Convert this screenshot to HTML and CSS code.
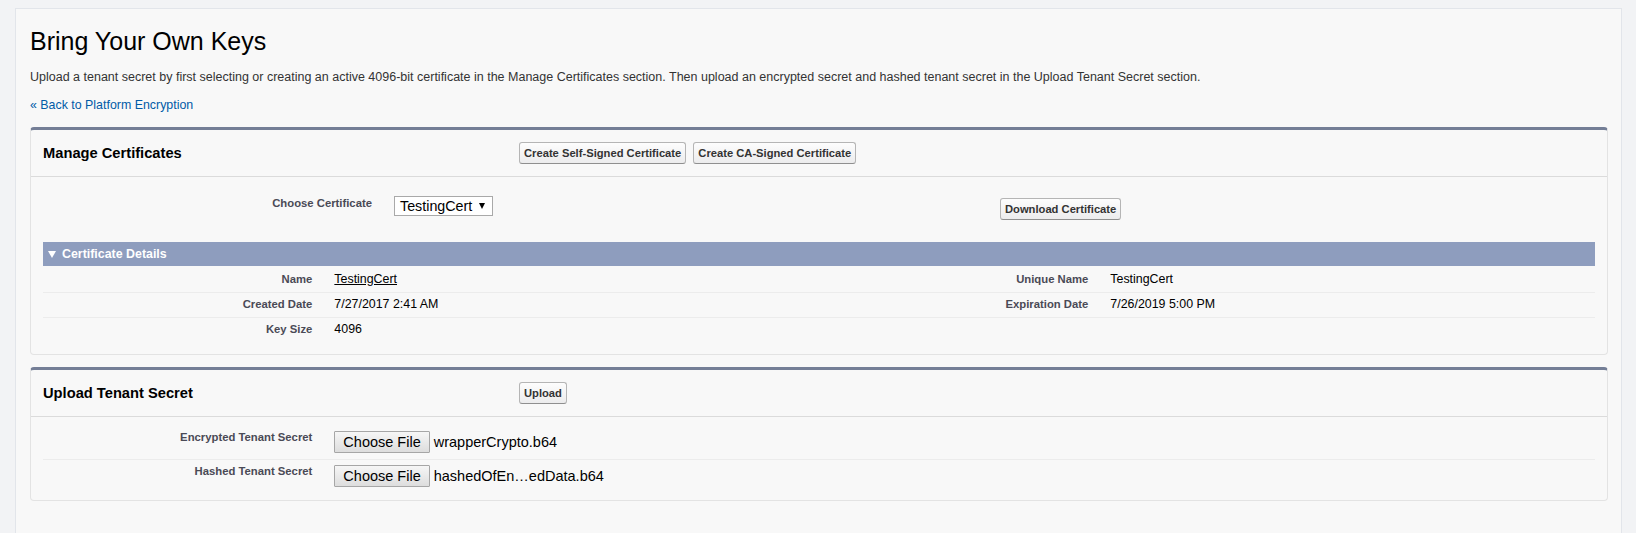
FILE: index.html
```html
<!DOCTYPE html>
<html lang="en">
<head>
<meta charset="utf-8">
<title>Bring Your Own Keys</title>
<link rel="stylesheet" href="styles.css">
</head>
<body>
<div class="page">
  <div class="card">
    <h1 class="title">Bring Your Own Keys</h1>
    <p class="desc">Upload a tenant secret by first selecting or creating an active 4096-bit certificate in the Manage Certificates section. Then upload an encrypted secret and hashed tenant secret in the Upload Tenant Secret section.</p>
    <a class="back" href="#">« Back to Platform Encryption</a>

    <section class="block">
      <div class="block-head">
        <h2 class="block-title">Manage Certificates</h2>
        <div class="btns">
          <button class="btn" type="button">Create Self-Signed Certificate</button>
          <button class="btn" type="button">Create CA-Signed Certificate</button>
        </div>
      </div>
      <div class="block-body cert-body">
        <div class="choose-row">
          <div class="lbl">Choose Certificate</div>
          <div class="val"><span class="fake-select">TestingCert<span class="caret"></span></span></div>
          <div class="dl"><button class="btn" type="button">Download Certificate</button></div>
        </div>
        <div class="subhead"><span class="tri"></span>Certificate Details</div>
        <div class="details">
          <div class="drow">
            <div class="lbl">Name</div>
            <div class="val"><a class="ulink" href="#">TestingCert</a></div>
            <div class="lbl">Unique Name</div>
            <div class="val">TestingCert</div>
          </div>
          <div class="drow">
            <div class="lbl">Created Date</div>
            <div class="val">7/27/2017 2:41 AM</div>
            <div class="lbl">Expiration Date</div>
            <div class="val">7/26/2019 5:00 PM</div>
          </div>
          <div class="drow last">
            <div class="lbl">Key Size</div>
            <div class="val">4096</div>
            <div class="lbl"></div>
            <div class="val"></div>
          </div>
        </div>
      </div>
    </section>

    <section class="block">
      <div class="block-head">
        <h2 class="block-title">Upload Tenant Secret</h2>
        <div class="btns">
          <button class="btn" type="button">Upload</button>
        </div>
      </div>
      <div class="block-body upload-body">
        <div class="urow">
          <div class="lbl">Encrypted Tenant Secret</div>
          <div class="val"><span class="file-btn">Choose File</span><span class="file-name">wrapperCrypto.b64</span></div>
        </div>
        <div class="urow last">
          <div class="lbl">Hashed Tenant Secret</div>
          <div class="val"><span class="file-btn">Choose File</span><span class="file-name">hashedOfEn…edData.b64</span></div>
        </div>
      </div>
    </section>
  </div>
</div>
</body>
</html>
```

FILE: styles.css
```css
* { box-sizing: border-box; }
html, body { margin: 0; padding: 0; }
body {
  background: #f2f3f5;
  font-family: "Liberation Sans", Arial, sans-serif;
  color: #000;
  overflow: hidden;
}
.page { padding: 8px 14px 0 15px; }
.card {
  background: #f8f8f8;
  border: 1px solid #e2e5ea;
  border-bottom: 0;
  min-height: calc(100vh - 8px);
  padding: 0 13px 0 14px;
}
.title {
  margin: 0;
  padding-top: 17px;
  font-size: 25px;
  line-height: 30px;
  font-weight: normal;
  color: #000;
}
.desc {
  margin: 14px 0 0;
  font-size: 12.5px;
  line-height: 15px;
  color: #333;
}
.back {
  display: block;
  margin-top: 13px;
  font-size: 12.4px;
  line-height: 15px;
  color: #015ba7;
  text-decoration: none;
}
.block {
  margin-top: 14px;
  background: #f8f8f8;
  border: 1px solid #e3e3e3;
  border-top: 3px solid #747e96;
  border-radius: 4px;
}
.block + .block { margin-top: 12px; }
.block-head {
  display: grid;
  grid-template-columns: 476px 1fr;
  align-items: center;
  height: 47px;
  padding-left: 12px;
  border-bottom: 1px solid #dbdbdb;
}
.block-title {
  margin: 0;
  font-size: 14.7px;
  font-weight: bold;
  color: #000;
  line-height: 18px;
}
.btns { display: flex; gap: 7px; }
.btn {
  font-family: "Liberation Sans", Arial, sans-serif;
  font-size: 11.2px;
  font-weight: bold;
  color: #333;
  line-height: 13px;
  padding: 4px 4px 3px;
  margin: 0;
  border: 1px solid #b5b5b5;
  border-bottom-color: #8f8f8f;
  border-radius: 3px;
  background: linear-gradient(#fdfdfd, #ececed);
}
.cert-body { padding: 19px 12px 12px; }
.lbl {
  font-size: 11.3px;
  font-weight: bold;
  color: #4a4a56;
  text-align: right;
  padding-right: 10px;
  line-height: 14px;
}
.val {
  padding-left: 12px;
  font-size: 12.4px;
  line-height: 14px;
  color: #000;
}
.choose-row {
  display: grid;
  grid-template-columns: 339px 618px 1fr;
  align-items: start;
}
.fake-select {
  display: inline-flex;
  align-items: center;
  height: 20px;
  padding: 0 7px 0 5px;
  border: 1px solid #a9a9a9;
  background: #fff;
  font-size: 14.3px;
  line-height: 18px;
  color: #000;
}
.caret {
  display: inline-block;
  width: 0; height: 0;
  margin-left: 7px;
  border-left: 3px solid transparent;
  border-right: 3px solid transparent;
  border-top: 6px solid #000;
}
.dl { padding-top: 2px; }
.subhead {
  margin-top: 22px;
  height: 24px;
  line-height: 24px;
  background: #8e9dbe;
  color: #fff;
  font-size: 12.4px;
  font-weight: bold;
  padding-left: 5px;
  display: flex;
  align-items: center;
}
.tri {
  display: inline-block;
  width: 0; height: 0;
  margin-right: 6px;
  border-left: 4.5px solid transparent;
  border-right: 4.5px solid transparent;
  border-top: 7px solid #fff;
}
.details { padding-top: 2px; }
.drow {
  display: grid;
  grid-template-columns: 18% 32% 18% 32%;
  height: 25px;
  padding-top: 4px;
  border-bottom: 1px solid #ececec;
}
.drow.last { height: 24px; border-bottom: 0; }
.ulink { color: #000; text-decoration: underline; }
.upload-body { padding: 9px 12px 7px; }
.urow {
  display: grid;
  grid-template-columns: 18% 82%;
  padding: 5px 0 6px;
  border-bottom: 1px solid #ececec;
}
.urow.last { border-bottom: 0; }
.urow .lbl { line-height: 12px; }
.urow .val { display: flex; align-items: center; }
.file-btn {
  display: inline-block;
  height: 22px;
  padding: 0 8px;
  border: 1px solid #a6a6a6;
  border-radius: 1px;
  background: linear-gradient(#f6f6f6, #dddddd);
  font-size: 14.5px;
  line-height: 20px;
  color: #000;
}
.file-name {
  margin-left: 4px;
  font-size: 14.5px;
  line-height: 22px;
  color: #000;
}
```
